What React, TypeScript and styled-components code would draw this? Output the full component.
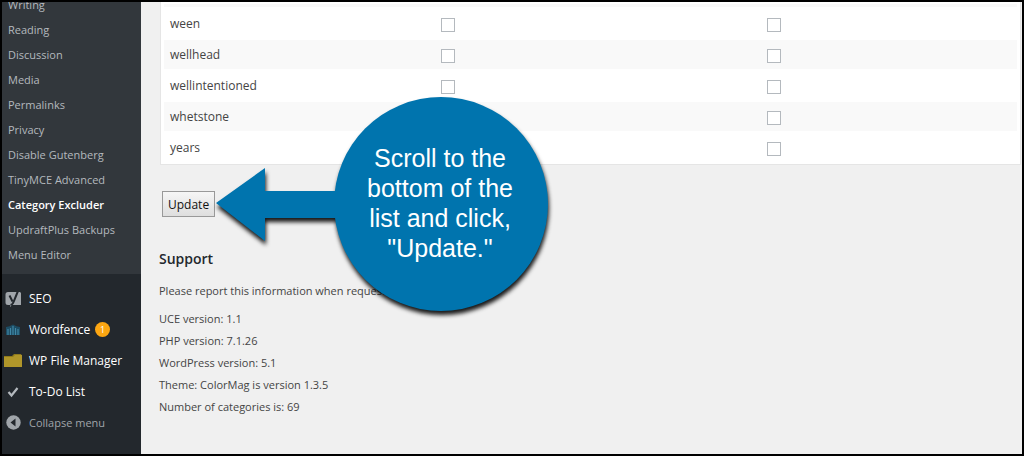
import React from "react";
import styled, { createGlobalStyle } from "styled-components";

const GlobalStyle = createGlobalStyle`
  *, *::before, *::after { box-sizing: border-box; }
  body { margin: 0; background: #000; font-family: "Open Sans", "Noto Sans", sans-serif; }
  ul { list-style: none; margin: 0; padding: 0; }
`;

const Frame = styled.div`
  display: flex;
  position: relative;
  min-height: 100vh;
  border: 2px solid #000;
  overflow: hidden;
  background: #f0f0f0;
`;

const Sidebar = styled.nav`
  flex: 0 0 139px;
  background: #23282d;
`;

const SubMenu = styled.ul`
  margin-top: -10px;
  padding-bottom: 7px;
  background: #32373c;
`;

const SubLink = styled.a<{ $current?: boolean }>`
  display: block;
  padding-left: 6px;
  font-size: 11px;
  line-height: 25px;
  white-space: nowrap;
  text-decoration: none;
  color: ${(p) => (p.$current ? "#fff" : "#b4b9be")};
  font-weight: ${(p) => (p.$current ? 600 : 400)};
`;

const MainMenu = styled.ul`
  padding-top: 9px;
`;

const MenuLink = styled.a`
  display: flex;
  align-items: center;
  height: 31px;
  font-size: 12px;
  white-space: nowrap;
  text-decoration: none;
  color: #fff;
`;

const CollapseButton = styled.button`
  display: flex;
  align-items: center;
  width: 100%;
  height: 31px;
  padding: 0;
  border: 0;
  background: none;
  font: 11px "Open Sans", "Noto Sans", sans-serif;
  color: #a0a5aa;
`;

const IconSlot = styled.span`
  display: flex;
  justify-content: center;
  flex: 0 0 22px;
  margin-right: 5px;
`;

const Badge = styled.span`
  width: 15px;
  height: 15px;
  margin-left: 5px;
  border-radius: 50%;
  background: #fca612;
  color: #fff;
  font-size: 9px;
  line-height: 15px;
  text-align: center;
`;

const Content = styled.main`
  flex: 1;
  min-width: 0;
  padding-left: 18px;
  color: #444;
`;

const Table = styled.table`
  width: calc(100% - 2px);
  margin-left: 1px;
  padding: 0 3px;
  border: 1px solid #e5e5e5;
  border-top: 0;
  border-spacing: 0 2px;
  background: #fff;
  table-layout: fixed;
  font-size: 12px;
`;

const Row = styled.tr`
  height: 29px;
  &:nth-child(even) { background: #f9f9f9; }
`;

const SpacerRow = styled.tr`
  height: 3px;
  background: #f9f9f9;
`;

const NameCell = styled.th`
  width: 277px;
  padding: 0 0 1px 6px;
  text-align: left;
  font-weight: 400;
`;

const CheckCell = styled.td`
  padding: 0;
  &:nth-child(2) { width: 326px; }
`;

const Check = styled.input`
  appearance: none;
  display: block;
  width: 14px;
  height: 14px;
  margin: 2px 0 0;
  border: 1px solid #b4b9be;
  background: #fff;
`;

const UpdateButton = styled.button`
  display: block;
  height: 26px;
  margin: 26px 0 0 3px;
  padding: 0 5px;
  border: 1px solid #999;
  background: linear-gradient(#f6f6f6, #dedede);
  color: #111;
  font: 12px "Open Sans", "Noto Sans", sans-serif;
`;

const Heading = styled.h2`
  margin: 31px 0 10px;
  font-size: 14px;
  line-height: 22px;
  font-weight: 600;
  color: #23282d;
`;

const Note = styled.p`
  margin: 0 0 6px;
  font-size: 11px;
  line-height: 22px;
`;

const Versions = styled.ul`
  font-size: 11px;
  line-height: 22px;
`;

const Callout = styled.aside`
  position: absolute;
  left: 212px;
  top: 93px;
  width: 340px;
  height: 222px;
`;

const CalloutShape = styled.svg`
  display: block;
  overflow: visible;
  filter: drop-shadow(1px 4px 2px rgba(0, 0, 0, 0.9));
`;

const CalloutText = styled.p`
  position: absolute;
  top: 48px;
  right: 8px;
  width: 212px;
  margin: 0;
  font: 25px/30px "Liberation Sans", Arial, sans-serif;
  text-align: center;
  color: #fff;
`;

const submenu = [
  "Writing", "Reading", "Discussion", "Media", "Permalinks", "Privacy",
  "Disable Gutenberg", "TinyMCE Advanced", "Category Excluder",
  "UpdraftPlus Backups", "Menu Editor",
];
const categories = ["ween", "wellhead", "wellintentioned", "whetstone", "years"];
const versions = [
  "UCE version: 1.1", "PHP version: 7.1.26", "WordPress version: 5.1",
  "Theme: ColorMag is version 1.3.5", "Number of categories is: 69",
];

const SeoIcon = () => (
  <svg width="18" height="18" viewBox="0 0 18 18" aria-hidden="true">
    <path d="M4 2h12l1 1v12H8l-2 2v-2H4q-2.500 0-2.500-2.500v-8Q1.500 2 4 2Z" fill="#a0a5aa" />
    <path d="m5.500 5.500 3 6M14 1 9.500 12q-1 2.800-3 3" fill="none" stroke="#23282d" strokeWidth="2" />
  </svg>
);
const WordfenceIcon = () => (
  <svg width="16" height="14" viewBox="0 0 16 14" aria-hidden="true">
    <path d="M1 12V4q3.500-.5 7-2.500 3.500 2 7 2.500v8Z" fill="#1d4c63" />
    <path d="M3 12V6M5.500 12V5M8 12V3M10.500 12V5M13 12V6" stroke="#3f87a6" strokeWidth="1.200" />
  </svg>
);
const FolderIcon = () => (
  <svg width="18" height="15" viewBox="0 0 18 15" aria-hidden="true">
    <path d="M0 3h8l2-2h7l1 2v11H0Z" fill="#8f7a1c" />
    <path d="M0 4h9l2-2h7v12H0Z" fill="#b0962a" />
  </svg>
);
const CheckIcon = () => (
  <svg width="12" height="12" viewBox="0 0 12 12" aria-hidden="true">
    <path d="m1.500 6 3 3.500L10.500 2" fill="none" stroke="#b4b9be" strokeWidth="2.200" />
  </svg>
);
const CollapseIcon = () => (
  <svg width="15" height="15" viewBox="0 0 15 15" aria-hidden="true">
    <circle cx="7.500" cy="7.500" r="7.200" fill="#a0a5aa" />
    <path d="M9.500 3.500v8l-5-4Z" fill="#23282d" />
  </svg>
);

const menu = [
  { label: "SEO", Icon: SeoIcon },
  { label: "Wordfence", Icon: WordfenceIcon, count: 1 },
  { label: "WP File Manager", Icon: FolderIcon },
  { label: "To-Do List", Icon: CheckIcon },
];

export default function App() {
  return (
    <Frame>
      <GlobalStyle />
      <Sidebar>
        <SubMenu>
          {submenu.map((label) => (
            <li key={label}>
              <SubLink href="#" $current={label === "Category Excluder"}>{label}</SubLink>
            </li>
          ))}
        </SubMenu>
        <MainMenu>
          {menu.map(({ label, Icon, count }) => (
            <li key={label}>
              <MenuLink href="#">
                <IconSlot><Icon /></IconSlot>
                {label}
                {count && <Badge>{count}</Badge>}
              </MenuLink>
            </li>
          ))}
          <li>
            <CollapseButton type="button">
              <IconSlot><CollapseIcon /></IconSlot>
              Collapse menu
            </CollapseButton>
          </li>
        </MainMenu>
      </Sidebar>
      <Content>
        <Table>
          <thead>
            <SpacerRow><NameCell as="td" /><CheckCell /><CheckCell /></SpacerRow>
          </thead>
          <tbody>
            {categories.map((name) => (
              <Row key={name}>
                <NameCell scope="row">{name}</NameCell>
                <CheckCell><Check type="checkbox" aria-label={`${name}, first exclusion`} /></CheckCell>
                <CheckCell><Check type="checkbox" aria-label={`${name}, second exclusion`} /></CheckCell>
              </Row>
            ))}
          </tbody>
        </Table>
        <UpdateButton type="button">Update</UpdateButton>
        <Heading>Support</Heading>
        <Note>Please report this information when requesting support:</Note>
        <Versions>
          {versions.map((line) => <li key={line}>{line}</li>)}
        </Versions>
      </Content>
      <Callout>
        <CalloutShape width="340" height="222" viewBox="0 0 340 222" aria-hidden="true">
          <circle cx="227" cy="109" r="107" fill="#0074ae" />
          <path d="M2 108 51 73v23h75v27H51v23Z" fill="#0074ae" />
        </CalloutShape>
        <CalloutText>Scroll to the<br />bottom of the<br />list and click,<br />"Update."</CalloutText>
      </Callout>
    </Frame>
  );
}
